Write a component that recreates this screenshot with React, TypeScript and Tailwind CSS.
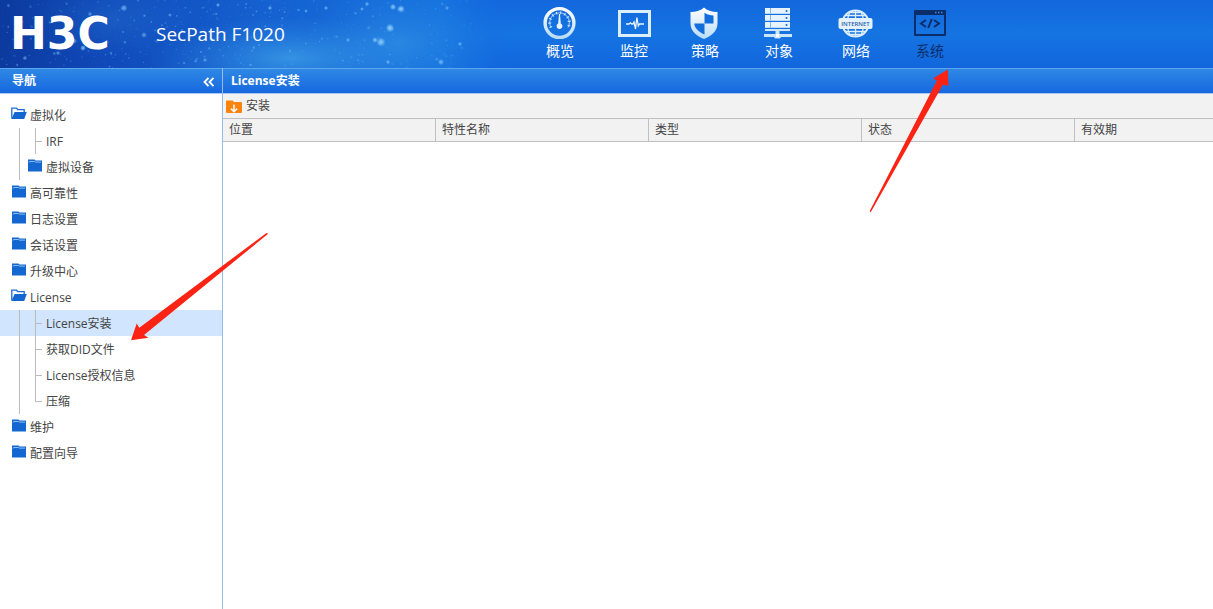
import React from "react";

const FONT = "font-['Open_Sans','Noto_Sans_CJK_SC',sans-serif]";

function seeded(seed: number) {
  let s = seed;
  return () => {
    s = (s * 16807) % 2147483647;
    return s / 2147483647;
  };
}

const rand = seeded(4217);
const STARS = Array.from({ length: 420 }, () => {
  const x = rand() * 500;
  const fade = x > 420 ? (500 - x) / 80 : 1;
  return { x, y: rand() * 68, r: 0.4 + rand() * rand() * 1.2, o: (0.12 + rand() * 0.42) * fade };
});
const BRIGHT: [number, number, number, number][] = [
  [393, 7, 2.2, 0.75], [401, 9, 2.6, 0.85], [390, 28, 3, 0.85], [381, 42, 3.2, 0.8], [375, 40, 2, 0.75],
  [441, 62, 2.2, 0.6], [388, 62, 1.6, 0.6], [460, 44, 1.6, 0.55], [447, 8, 1.5, 0.5], [367, 4, 1.6, 0.6],
  [326, 8, 1.5, 0.6], [306, 11, 1.3, 0.6], [362, 9, 1.4, 0.6], [83, 48, 2, 0.75], [74, 41, 2, 0.6],
  [124, 8, 2.4, 0.6], [144, 35, 2, 0.5], [218, 5, 1.5, 0.6], [58, 53, 1.6, 0.5], [348, 40, 1.6, 0.5],
  [270, 8, 1.5, 0.6], [90, 14, 1.6, 0.5], [25, 58, 1.6, 0.5], [170, 15, 1.4, 0.5], [205, 60, 1.5, 0.5],
];

function Sky() {
  return (
    <svg className="absolute left-0 top-0 h-full" width="520" height="68" viewBox="0 0 520 68" preserveAspectRatio="none" aria-hidden="true">
      <defs>
        <linearGradient id="sky" x1="0" x2="1" y1="0" y2="0">
          <stop offset="0" stopColor="#0c3a9e" />
          <stop offset="0.2" stopColor="#1049b9" />
          <stop offset="0.5" stopColor="#1560d0" />
          <stop offset="0.85" stopColor="#1672df" />
          <stop offset="1" stopColor="#146bde" stopOpacity="0" />
        </linearGradient>
        <radialGradient id="glow">
          <stop offset="0" stopColor="#3fa2e8" stopOpacity="0.75" />
          <stop offset="1" stopColor="#2787e2" stopOpacity="0" />
        </radialGradient>
        <radialGradient id="star">
          <stop offset="0" stopColor="#b4e2ff" />
          <stop offset="0.5" stopColor="#7cc3f8" stopOpacity="0.8" />
          <stop offset="1" stopColor="#59aef4" stopOpacity="0" />
        </radialGradient>
      </defs>
      <rect width="520" height="68" fill="url(#sky)" />
      <ellipse cx="290" cy="58" rx="140" ry="42" fill="url(#glow)" />
      <ellipse cx="400" cy="42" rx="100" ry="56" fill="url(#glow)" opacity="0.6" />
      <ellipse cx="110" cy="20" rx="90" ry="40" fill="url(#glow)" opacity="0.25" />
      {STARS.map((s, i) => (
        <circle key={i} cx={s.x} cy={s.y} r={s.r} fill="#6bb6f6" opacity={s.o} />
      ))}
      {BRIGHT.map(([x, y, r, o], i) => (
        <circle key={i} cx={x} cy={y} r={r * 1.5} fill="url(#star)" opacity={o} />
      ))}
    </svg>
  );
}

function Shine() {
  return (
    <defs>
      <linearGradient id="shine" x1="0" x2="0" y1="0" y2="1">
        <stop offset="0" stopColor="#ffffff" />
        <stop offset="1" stopColor="#b9dcf8" />
      </linearGradient>
    </defs>
  );
}

const gauge = (
  <svg width="34" height="34" viewBox="0 0 34 34">
    <Shine />
    <circle cx="16.500" cy="17" r="14.400" fill="none" stroke="url(#shine)" strokeWidth="3.400" />
    <path d="M8 21.500A9.800 9.800 0 1 1 25 21.500" fill="none" stroke="#cfe6fa" strokeWidth=".8" />
    <path d="M8 21.500A9.800 9.800 0 1 1 25 21.500" fill="none" stroke="#cfe6fa" strokeWidth="3" strokeDasharray="1 3.200" />
    <path d="M16 8h1l.8 9.600a2.900 2.900 0 1 1-2.600 0z" fill="#e6f3fe" />
  </svg>
);

const monitor = (
  <svg width="34" height="34" viewBox="0 0 34 34">
    <rect x="2.500" y="5.500" width="30" height="24" fill="none" stroke="#dceefc" strokeWidth="3" />
    <path d="M9 18h3l1.400-1.200 1.400 1.200h1l1.200-2 1.500 7 1.400-11.500 1.400 8.500 1.200-2h3M25.500 18H27" fill="none" stroke="#eaf5fe" strokeWidth="1.300" />
  </svg>
);

const shield = (
  <svg width="34" height="34" viewBox="0 0 34 34">
    <path d="M16 1.500c3 2.800 7.500 4.500 13.500 4.500V17.500C29.500 26 22 30.500 16 33C10 30.500 2.500 26 2.500 17.500V6C8.500 6 13 4.300 16 1.500z" fill="url(#shine)" />
    <path d="M16.500 6.700c2.800 1.700 5.500 2.600 9 2.900V17.500h-9z" fill="#146ddd" />
    <path d="M16.500 17.500v11C12 26.500 6.500 23 6.300 17.500z" fill="#146ddd" />
  </svg>
);

const servers = (
  <svg width="34" height="34" viewBox="0 0 34 34">
    {[2, 9, 16].map((y) => (
      <g key={y}>
        <rect x="3" y={y} width="25" height="5.800" fill="#e6f3fe" />
        <rect x="8" y={y} width="1" height="5.800" fill="#7eb6ee" />
        <circle cx="24.500" cy={y + 3} r="1" fill="#1565d3" />
      </g>
    ))}
    <path d="M3 23h25v2H17.500v3H30v3H19l-1 1.500h-5L12 31H2v-3h11.500v-3H3z" fill="#cbe5f9" />
    <rect x="14" y="28" width="3" height="3" fill="#fff" />
  </svg>
);

const globe = (
  <svg width="36" height="34" viewBox="0 0 36 34">
    <circle cx="17.500" cy="17.500" r="13" fill="none" stroke="#dceefc" strokeWidth="2" />
    <path d="M8 9.500h19M10.500 6.500h14M8 25.500h19M10.500 28.500h14M17.500 4v27M12.500 5c-4 7-4 18 0 25M22.500 5c4 7 4 18 0 25" fill="none" stroke="#dceefc" strokeWidth="1.300" />
    <rect x="0.500" y="12" width="34" height="11" rx="2" fill="#e4f2fd" />
    <text x="17.500" y="20" textAnchor="middle" fontSize="6" fontWeight="600" fontFamily="Open Sans, sans-serif" fill="#2b5fa8">INTERNET</text>
  </svg>
);

const code = (
  <svg width="34" height="34" viewBox="0 0 34 34">
    <path d="M1 5a1 1 0 0 1 1-1h30a1 1 0 0 1 1 1V29a1 1 0 0 1-1 1H2a1 1 0 0 1-1-1zM3 9v19h28V9z" fill="#0b2e6b" fillRule="evenodd" />
    <path d="M22 6.500h1.500M25 6.500h1.500M28 6.500h1.500" stroke="#3d84dc" strokeWidth="1.500" />
    <path d="M13 14l-5 3.500 5 3.500M21 14l5 3.500-5 3.500M18.800 13l-3.600 9" fill="none" stroke="#0b2e6b" strokeWidth="2" />
  </svg>
);

const MENU = [
  { label: "概览", icon: gauge, width: "w-[74px]" },
  { label: "监控", icon: monitor, width: "w-[74px]" },
  { label: "策略", icon: shield, width: "w-[68px]" },
  { label: "对象", icon: servers, width: "w-20" },
  { label: "网络", icon: globe, width: "w-[74px]" },
  { label: "系统", icon: code, width: "w-[74px]", active: true },
];

function Folder({ open }: { open?: boolean }) {
  return open ? (
    <svg className="mb-1 shrink-0" width="16" height="13" viewBox="0 0 16 13" aria-hidden="true">
      <path d="M.8 11.500V1.200h4.700l1.300 1.500h6.400V5" fill="none" stroke="#1a6cd4" strokeWidth="1.300" />
      <path d="M3.600 5H15.800l-2.600 7H.5z" fill="#1467d0" />
    </svg>
  ) : (
    <svg className="mb-1 shrink-0" width="16" height="13" viewBox="0 0 16 13" aria-hidden="true">
      <path d="M1 .5h6.500l1 1H15v11H1z" fill="#1467d0" />
      <path d="M2 3.500c0-.7.400-1 1-1h4.500l.800.600H14" fill="none" stroke="#9cc8f2" strokeWidth=".9" />
    </svg>
  );
}

type Node = { label: string; children?: Node[]; open?: boolean; selected?: boolean };

const TREE: Node[] = [
  { label: "虚拟化", open: true, children: [{ label: "IRF" }, { label: "虚拟设备", children: [] }] },
  { label: "高可靠性" },
  { label: "日志设置" },
  { label: "会话设置" },
  { label: "升级中心" },
  {
    label: "License",
    open: true,
    children: [{ label: "License安装", selected: true }, { label: "获取DID文件" }, { label: "License授权信息" }, { label: "压缩" }],
  },
  { label: "维护" },
  { label: "配置向导" },
];

function Leaf({ node, last }: { node: Node; last: boolean }) {
  return (
    <li className={node.selected ? "bg-[#d1e5fe]" : ""}>
      <a href="#" className="flex h-[26px] items-center pl-[19px]">
        <span className="h-full w-px bg-[#bcbcbc]" />
        {node.children ? (
          <span className="flex items-center gap-[3px] pl-[7px]">
            <Folder />
            <span className="pt-0.5">{node.label}</span>
          </span>
        ) : (
          <>
            <span className="ml-[15px] flex h-full w-[7px] flex-col">
              <span className="h-[14px] border-b border-l border-[#bcbcbc]" />
              <span className={last ? "h-3" : "h-3 border-l border-[#bcbcbc]"} />
            </span>
            <span className="pt-0.5 pl-1">{node.label}</span>
          </>
        )}
      </a>
    </li>
  );
}

function Branch({ node }: { node: Node }) {
  const children = node.children ?? [];
  return (
    <li>
      <button type="button" aria-expanded={!!node.open} className="flex h-[26px] w-full items-center gap-[3px] pl-[11px]">
        <Folder open={node.open} />
        <span className="pt-0.5">{node.label}</span>
      </button>
      {node.open && (
        <ul>
          {children.map((c, i) => (
            <Leaf key={c.label} node={c} last={i === children.length - 1} />
          ))}
        </ul>
      )}
    </li>
  );
}

const BAR =
  "flex h-[26px] items-center border-t border-b border-t-[#5ba6ef] border-b-[#a9c9f3] bg-linear-to-b from-[#2f88e4] to-[#1767df] text-xs font-bold text-white";

const TH = "border-y border-[#c0c0c0] px-1.5 font-normal";

export default function App() {
  return (
    <div className={`relative flex min-h-screen flex-col overflow-hidden bg-white text-xs text-[#444] ${FONT}`}>
      <header className="relative flex h-[68px] bg-linear-to-b from-[#1267dc] via-[#1674e2] to-[#1166dc]">
        <Sky />
        <div className="relative flex w-[523px] shrink-0 items-center">
          <span className="w-[144px] pl-[10px] font-['DejaVu_Sans',sans-serif] text-[44px] leading-none font-bold text-white">H3C</span>
          <h1 className="pl-3 text-[19px] leading-none font-normal text-white">SecPath F1020</h1>
        </div>
        <nav className="relative flex">
          {MENU.map((m) => (
            <button
              key={m.label}
              type="button"
              className={`flex flex-col items-center pt-1.5 text-sm leading-[22px] ${m.width} ${m.active ? "text-[#0b2e6b]" : "text-white"}`}
            >
              {m.icon}
              <span>{m.label}</span>
            </button>
          ))}
        </nav>
      </header>

      <div className="flex grow">
        <aside className="w-[223px] shrink-0 border-r border-[#99bbe8]">
          <div className={`${BAR} justify-between pr-[7px] pl-3`}>
            <h2>导航</h2>
            <button type="button" aria-label="收起" className="pt-0.5">
              <svg width="12" height="10" viewBox="0 0 12 10" fill="none" stroke="#fff" strokeWidth="1.900">
                <path d="M5.500 .8L1.500 5l4 4.200M10.500 .8L6.500 5l4 4.200" />
              </svg>
            </button>
          </div>
          <ul className="pt-2">
            {TREE.map((n) => (
              <Branch key={n.label} node={n} />
            ))}
          </ul>
        </aside>

        <main className="min-w-0 grow">
          <h2 className={`${BAR} pl-2`}>License安装</h2>
          <div className="flex h-6 items-center bg-[#f2f2f2] pl-[3px]">
            <button type="button" className="flex items-center gap-1">
              <svg width="16" height="13" viewBox="0 0 16 13" aria-hidden="true">
                <path d="M0 1.500Q0 .5 1 .5h5.500L8 2h7q1 0 1 1v9q0 1-1 1H1q-1 0-1-1z" fill="#fb850c" />
                <path d="M8 4.500v7M5 8.800l3 3 3-3" fill="none" stroke="#fff" strokeWidth="1.500" />
              </svg>
              安装
            </button>
          </div>
          <table className="w-full table-fixed border-separate border-spacing-0">
            <thead>
              <tr className="h-6 bg-[#f2f2f2] text-left">
                <th className={`${TH} w-[213px] border-r`}>位置</th>
                <th className={`${TH} w-[213px] border-r`}>特性名称</th>
                <th className={`${TH} w-[213px] border-r`}>类型</th>
                <th className={`${TH} w-[213px] border-r`}>状态</th>
                <th className={TH}>有效期</th>
              </tr>
            </thead>
          </table>
        </main>
      </div>

      <svg className="pointer-events-none absolute left-[130px] top-[232px]" width="140" height="110" viewBox="130 232 140 110" aria-hidden="true">
        <path d="M131 340.300L136.700 323.500L139.300 327.700L266.500 233L268 233.500L267.300 234.500L144 335L148.500 337.700z" fill="#fb2414" />
      </svg>
      <svg className="pointer-events-none absolute left-[868px] top-[68px]" width="84" height="146" viewBox="868 68 84 146" aria-hidden="true">
        <path d="M947.800 69.500L933 78.500L937 80.500L870 210.500L869.800 212L871 211.800L943 84.500L948.500 86z" fill="#fb2414" />
      </svg>
    </div>
  );
}
